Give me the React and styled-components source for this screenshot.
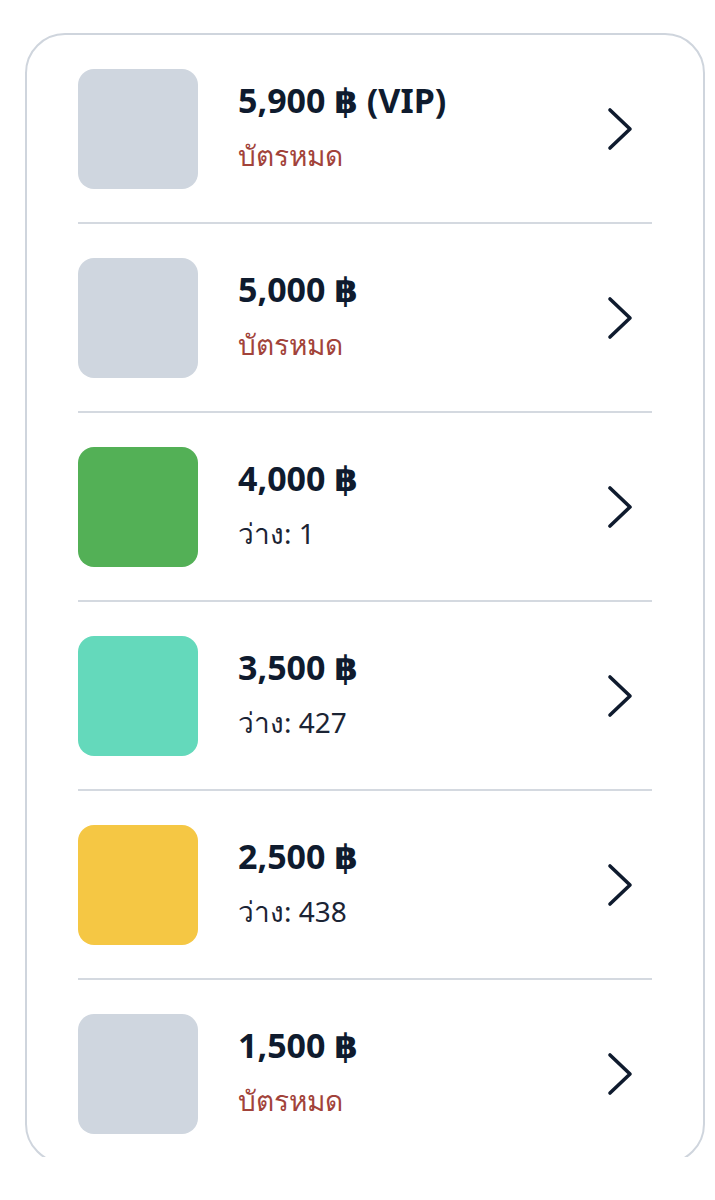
import React from 'react';
import styled, { createGlobalStyle } from 'styled-components';

const GlobalStyle = createGlobalStyle`
    html, body {
        margin: 0;
        padding: 0;
        background: #ffffff;
    }
    body {
        font-family: "Noto Sans", "DejaVu Sans", sans-serif;
    }
`;

const Viewport = styled.div`
    height: 1157px;
    overflow: hidden;
    padding: 33px 10px 0 25px;
    box-sizing: border-box;
`;

const Card = styled.div`
    border: 2px solid #cfd5dd;
    border-radius: 40px;
    padding: 0 51px;
    background: #fff;
`;

const Row = styled.div`
    display: flex;
    align-items: center;
    padding: 34px 0 33px;
    border-bottom: 2px solid #d4d9e0;

    &:last-child {
        border-bottom: none;
        padding-bottom: 28px;
    }
`;

const Swatch = styled.div`
    width: 120px;
    height: 120px;
    flex-shrink: 0;
    border-radius: 16px;
    background: ${(p) => p.color};
`;

const Info = styled.div`
    display: flex;
    flex-direction: column;
    gap: 16px;
    margin-left: 40px;
    margin-bottom: 6px;
`;

const Price = styled.div`
    font-size: 34px;
    line-height: 42px;
    font-weight: 700;
    color: #0f1b2e;
`;

const Status = styled.div`
    font-size: 28px;
    line-height: 36px;
    font-weight: 400;
    color: ${(p) => (p.soldOut ? '#a2433a' : '#1b2434')};
`;

const Chevron = styled.svg`
    margin-left: auto;
    margin-right: 18px;
    flex-shrink: 0;
`;

const tickets = [
    { price: '5,900 ฿ (VIP)', color: '#cfd6df', left: 0 },
    { price: '5,000 ฿', color: '#cfd6df', left: 0 },
    { price: '4,000 ฿', color: '#53b056', left: 1 },
    { price: '3,500 ฿', color: '#64d9bb', left: 427 },
    { price: '2,500 ฿', color: '#f5c744', left: 438 },
    { price: '1,500 ฿', color: '#cfd6df', left: 0 },
];

const ArrowIcon = () => (
    <Chevron width="28" height="46" viewBox="0 0 28 46">
        <polyline
            points="4,4 24,23 4,42"
            fill="none"
            stroke="#0f1b2e"
            strokeWidth="3.6"
            strokeLinecap="round"
            strokeLinejoin="round"
        />
    </Chevron>
);

export default function App() {
    return (
        <>
            <GlobalStyle />
            <Viewport>
                <Card>
                    {tickets.map((t) => (
                        <Row key={t.price}>
                            <Swatch color={t.color} />
                            <Info>
                                <Price>{t.price}</Price>
                                {t.left > 0
                                    ? <Status>ว่าง: {t.left}</Status>
                                    : <Status soldOut>บัตรหมด</Status>}
                            </Info>
                            <ArrowIcon />
                        </Row>
                    ))}
                </Card>
            </Viewport>
        </>
    );
}
